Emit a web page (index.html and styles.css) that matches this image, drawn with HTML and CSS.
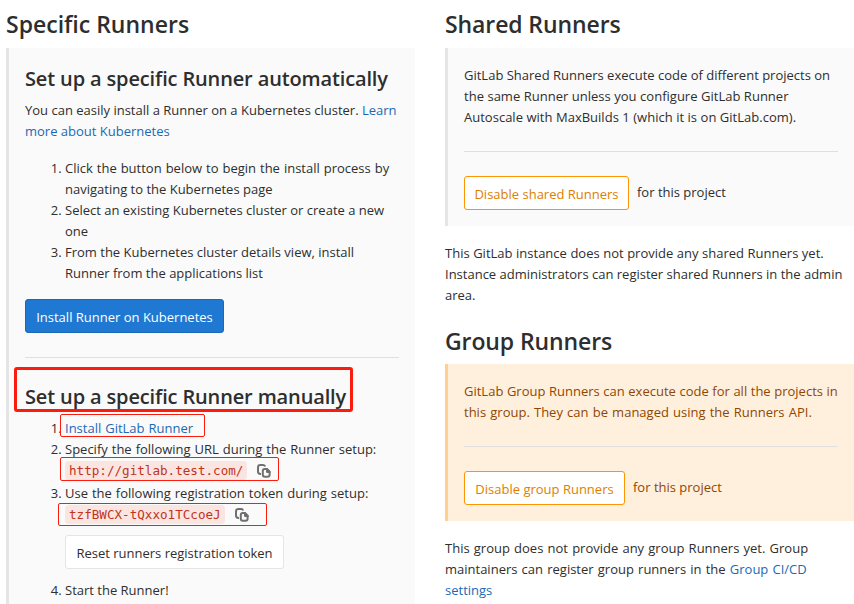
FILE: index.html
```html
<!DOCTYPE html>
<html lang="en">
<head>
<meta charset="utf-8">
<title>Runners</title>
<link rel="stylesheet" href="styles.css">
</head>
<body>
<svg class="sprite" aria-hidden="true">
  <symbol id="copy" viewBox="0 0 16 16">
    <path d="M5 10.9H4.4A2.4 2.4 0 0 1 2 8.5V4.4A2.4 2.4 0 0 1 4.4 2H7.2A2.2 2.2 0 0 1 9.2 3.6" fill="none" stroke="#707070" stroke-width="2"/>
    <path d="M8.8 6H10.8L13.6 8.8V11.8A2 2 0 0 1 11.6 13.8H8.8A2 2 0 0 1 6.8 11.8V8A2 2 0 0 1 8.8 6Z" fill="none" stroke="#707070" stroke-width="2"/>
    <path d="M10 5H11.3L14.6 8.3V10H11.2A1.2 1.2 0 0 1 10 8.8Z" fill="#707070"/>
  </symbol>
</svg>
<main class="runners">
  <section class="column">
    <h2>Specific Runners</h2>
    <div class="panel specific">
      <h4>Set up a specific Runner automatically</h4>
      <p>You can easily install a Runner on a Kubernetes cluster. <a href="#">Learn<br>more about Kubernetes</a></p>
      <ol class="auto-steps">
        <li><span class="wide">Click the button below to begin the install process by</span><br>navigating to the Kubernetes page</li>
        <li>Select an existing Kubernetes cluster or create a new<br>one</li>
        <li>From the Kubernetes cluster details view, install<br>Runner from the applications list</li>
      </ol>
      <a class="btn primary" href="#">Install Runner on Kubernetes</a>
      <hr>
      <h4 class="marked mark-title">Set up a specific Runner manually</h4>
      <ol class="manual-steps">
        <li><a class="wide marked mark-link" href="#">Install GitLab Runner</a></li>
        <li><span class="wide">Specify the following URL during the Runner setup:</span>
          <div class="value marked mark-url"><code>http://gitlab.test.com/</code><svg class="icon"><use href="#copy"/></svg></div>
        </li>
        <li><span class="wide">Use the following registration token during setup:</span>
          <div class="value marked mark-token"><code>tzfBWCX-tQxxo1TCcoeJ</code><svg class="icon"><use href="#copy"/></svg></div>
          <button class="btn reset">Reset runners registration token</button>
        </li>
        <li>Start the Runner!</li>
      </ol>
    </div>
  </section>
  <section class="column">
    <h2 class="tight">Shared Runners</h2>
    <div class="panel shared-panel">
      <p>GitLab Shared Runners execute code of different projects on<br><span class="wide">the same Runner unless you configure GitLab Runner</span><br><span class="wide">Autoscale with MaxBuilds 1 (which it is on GitLab.com).</span></p>
      <hr>
      <div class="action"><button class="btn warning shared">Disable shared Runners</button><span>for this project</span></div>
    </div>
    <p class="note"><span class="wide">This GitLab instance does not provide any shared Runners yet.</span><br>Instance administrators can register shared Runners in the admin<br>area.</p>
    <h2 class="tight group-title">Group Runners</h2>
    <div class="panel shared-panel caution">
      <p><span class="slight">GitLab Group Runners can execute code for all the projects in</span><br><span class="wider">this group. They can be managed using the Runners API.</span></p>
      <hr>
      <div class="action"><button class="btn warning group">Disable group Runners</button><span>for this project</span></div>
    </div>
    <p class="note"><span class="wider">This group does not provide any group Runners yet. Group</span><br><span class="wider">maintainers can register group runners in the <a href="#">Group CI/CD</a></span><br><a href="#">settings</a></p>
  </section>
</main>
</body>
</html>
```
FILE: styles.css
```css
*, *::after { box-sizing: border-box; }
html { overflow: hidden; }
body {
  margin: 0;
  height: 604px;
  overflow: hidden;
  background: #fff;
  color: #2e2e2e;
  font: 13px/21px "Open Sans", "Noto Sans", sans-serif;
  white-space: nowrap;
}
.sprite { display: none; }
a { color: #1b69b6; text-decoration: none; }
p, h2, h4, ol { margin: 0; }
.slight { word-spacing: 0.2px; }
.wide { word-spacing: 0.1px; letter-spacing: 0.01px; }
.wider { word-spacing: 0.8px; }

.runners {
  display: grid;
  grid-template-columns: 409px 409px;
  column-gap: 30px;
  padding-left: 6px;
}
h2 { height: 48px; font-size: 23px; line-height: 49px; font-weight: 600; }
h4 { font-size: 20px; line-height: 28px; font-weight: 600; letter-spacing: -0.14px; }
.tight { letter-spacing: -0.1px; }

.panel { padding: 17px 16px 16px; border-left: 3px solid #e5e5e5; background: #fafafa; }
.specific { height: 570px; }
.specific > p { margin-top: 7px; }
hr { height: 1px; margin: 24px 0; border: 0; background: #dfdfdf; }
.shared-panel hr { margin-top: 23px; }

ol { padding-left: 40px; }
.auto-steps { margin: 16px 0 15px; }
.auto-steps .wide, .manual-steps .wide { word-spacing: 0.6px; letter-spacing: 0; }

.btn {
  display: inline-block;
  height: 34px;
  padding: 2px 0 0;
  border: 1px solid;
  border-radius: 3px;
  font: inherit;
  line-height: 30px;
  text-align: center;
}
.primary { display: block; width: 199px; border-color: #1b69b6; background: #1f78d1; color: #fff; }
.warning { border-color: #fc9403; background: #fff; color: #de7e00; }
.shared { width: 165px; }
.group { width: 161px; }
.reset { display: block; width: 219px; margin: 8px 0 11px; border-color: #e5e5e5; background: #fff; color: #2e2e2e; }

.value { display: flex; align-items: center; height: 23px; padding-bottom: 2px; }
code {
  padding: 2px 4px;
  border-radius: 4px;
  background: #fbe5e1;
  color: #c0341d;
  font: 12.6px/15px "DejaVu Sans Mono", monospace;
}
.icon { width: 16px; height: 16px; margin-left: 9px; }

.marked { position: relative; }
.marked::after { content: ""; position: absolute; border: 1px solid #fb1c0d; border-radius: 2px; }
.mark-title { margin-top: 25px; margin-bottom: 7px; }
.mark-title::after { left: -11px; top: -16px; width: 339px; height: 45px; border-width: 3px; border-radius: 3px; }
.mark-link::after { left: -5px; top: -5px; width: 145px; height: 23px; }
.mark-url::after { left: -5px; top: -3px; width: 219px; height: 24px; }
.mark-token::after { left: -7px; top: -1px; width: 209px; height: 23px; }

.action { display: flex; gap: 8px; }
.action span { line-height: 33px; }
.note { margin-top: 17px; }
.group-title { height: 47px; margin-top: 11px; }
.caution { border-left-color: #ffd08f; background: #fff0de; color: #8f4700; }
```
